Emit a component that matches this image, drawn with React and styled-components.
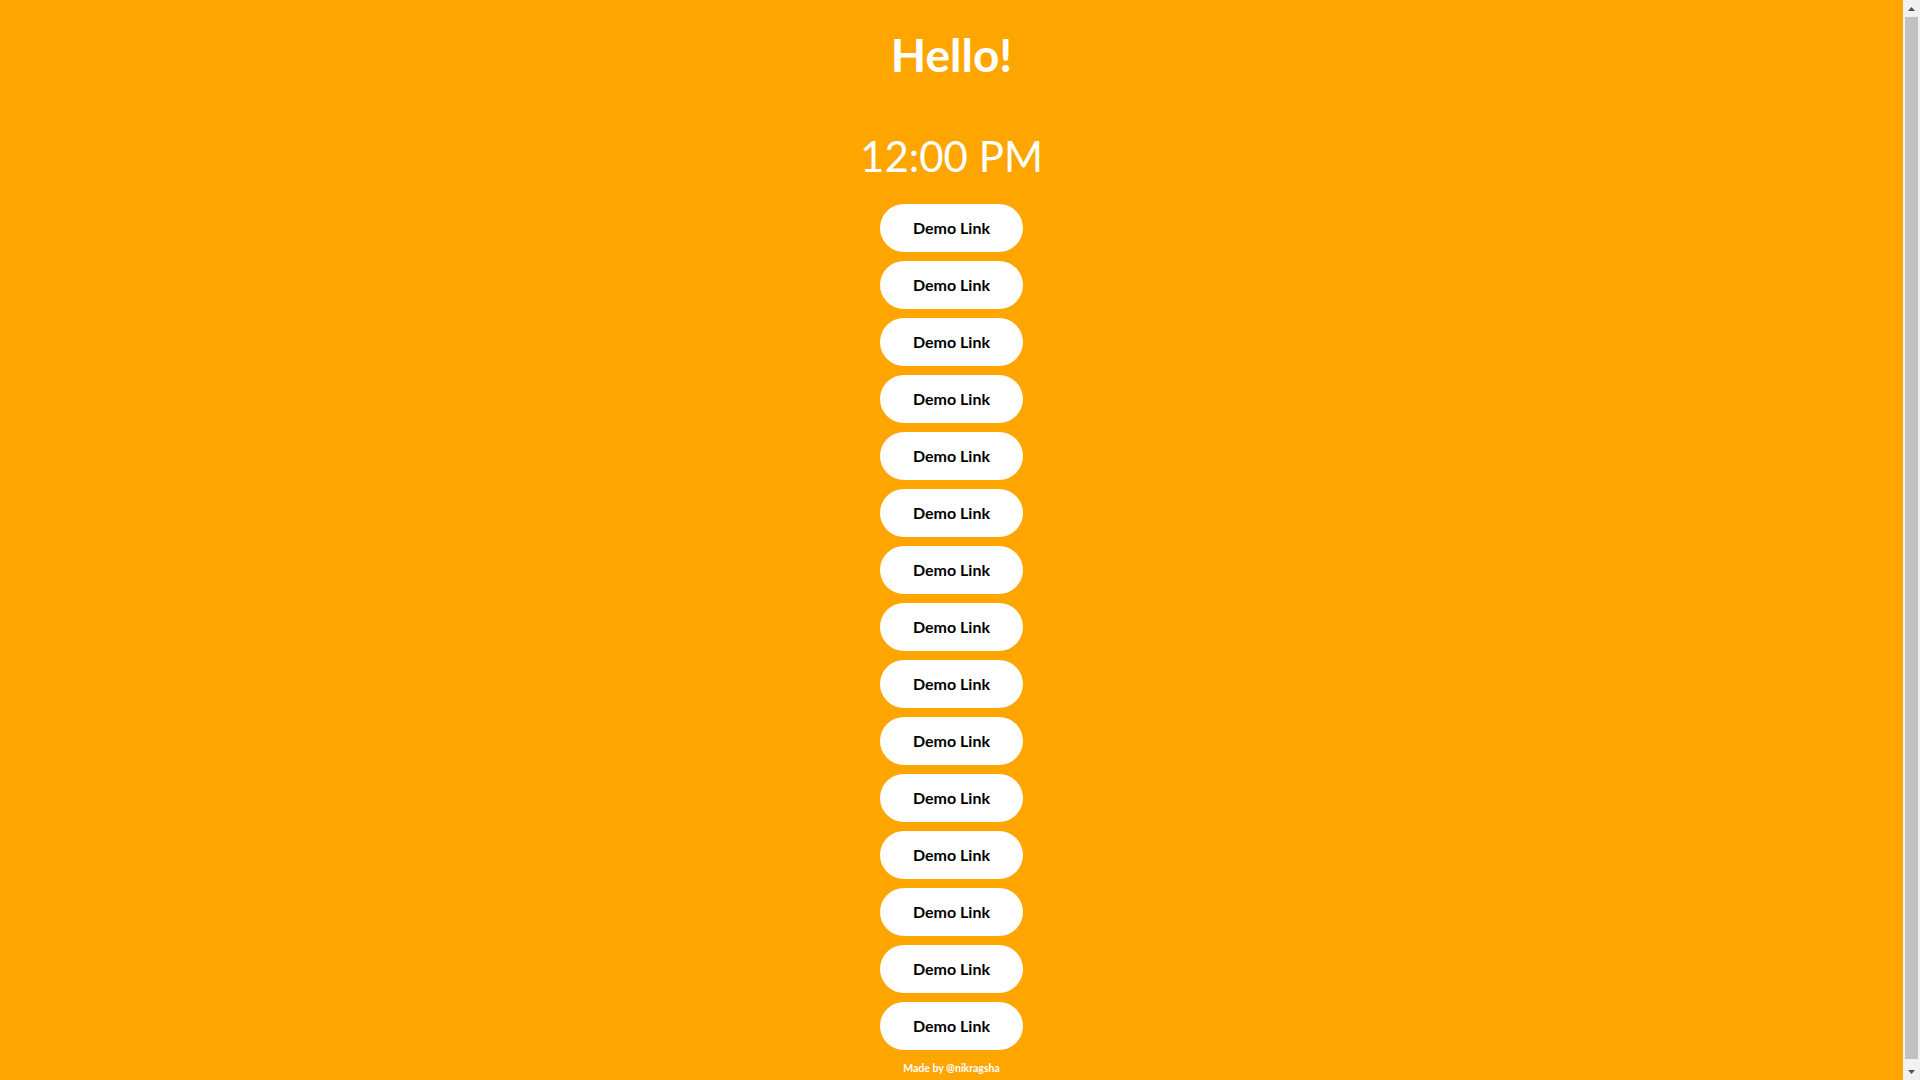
import React from "react";
import styled, { createGlobalStyle } from "styled-components";

const GlobalStyle = createGlobalStyle`
  html, body {
    margin: 0;
    padding: 0;
    background: #ffa500;
  }
  body {
    font-family: Lato, "Open Sans", sans-serif;
  }
`;

const Page = styled.main`
  display: flex;
  flex-direction: column;
  align-items: center;
  padding: 32px 17px 7px 0;
  color: #fff;
`;

const Title = styled.h1`
  margin: 0;
  font-size: 46px;
  line-height: 46px;
  font-weight: 700;
`;

const Clock = styled.div`
  margin-top: 57px;
  font-size: 42px;
  line-height: 43px;
  font-weight: 400;
`;

const LinkList = styled.nav`
  display: flex;
  flex-direction: column;
  align-items: center;
  gap: 9px;
  margin-top: 26px;
`;

const LinkButton = styled.a`
  display: flex;
  align-items: center;
  justify-content: center;
  width: 143px;
  height: 48px;
  padding-bottom: 1px;
  box-sizing: border-box;
  border-radius: 24px;
  background: #fff;
  color: #000;
  font-size: 16px;
  font-weight: 700;
  text-decoration: none;
`;

const Footer = styled.footer`
  margin-top: 13px;
  font-size: 10.5px;
  line-height: 11px;
  font-weight: 700;
  color: #fff;
`;

const ScrollGutter = styled.div`
  position: fixed;
  top: 0;
  right: 0;
  bottom: 0;
  width: 17px;
  display: flex;
  flex-direction: column;
  align-items: center;
  background: #f1f1f1;
`;

const ScrollArrow = styled.div`
  height: 17px;
  display: flex;
  align-items: center;
  justify-content: center;
  svg {
    display: block;
  }
`;

const ScrollThumb = styled.div`
  flex: 1;
  width: 13px;
  margin: 0 0 4px;
  background: #c1c1c1;
`;

const Arrow = ({ down }) => (
  <ScrollArrow>
    <svg width="7" height="4" viewBox="0 0 7 4">
      <path d={down ? "M0 0H7L3.5 4Z" : "M3.5 0L7 4H0Z"} fill="#505050" />
    </svg>
  </ScrollArrow>
);

const links = Array.from({ length: 15 }, (_, i) => ({ id: i, label: "Demo Link" }));

const App = () => {
  return (
    <>
      <GlobalStyle />
      <Page>
        <Title>Hello!</Title>
        <Clock>12:00 PM</Clock>
        <LinkList>
          {links.map((link) => (
            <LinkButton key={link.id} href="#">
              {link.label}
            </LinkButton>
          ))}
        </LinkList>
        <Footer>Made by @nikragsha</Footer>
      </Page>
      <ScrollGutter>
        <Arrow />
        <ScrollThumb />
        <Arrow down />
      </ScrollGutter>
    </>
  );
};

export default App;
